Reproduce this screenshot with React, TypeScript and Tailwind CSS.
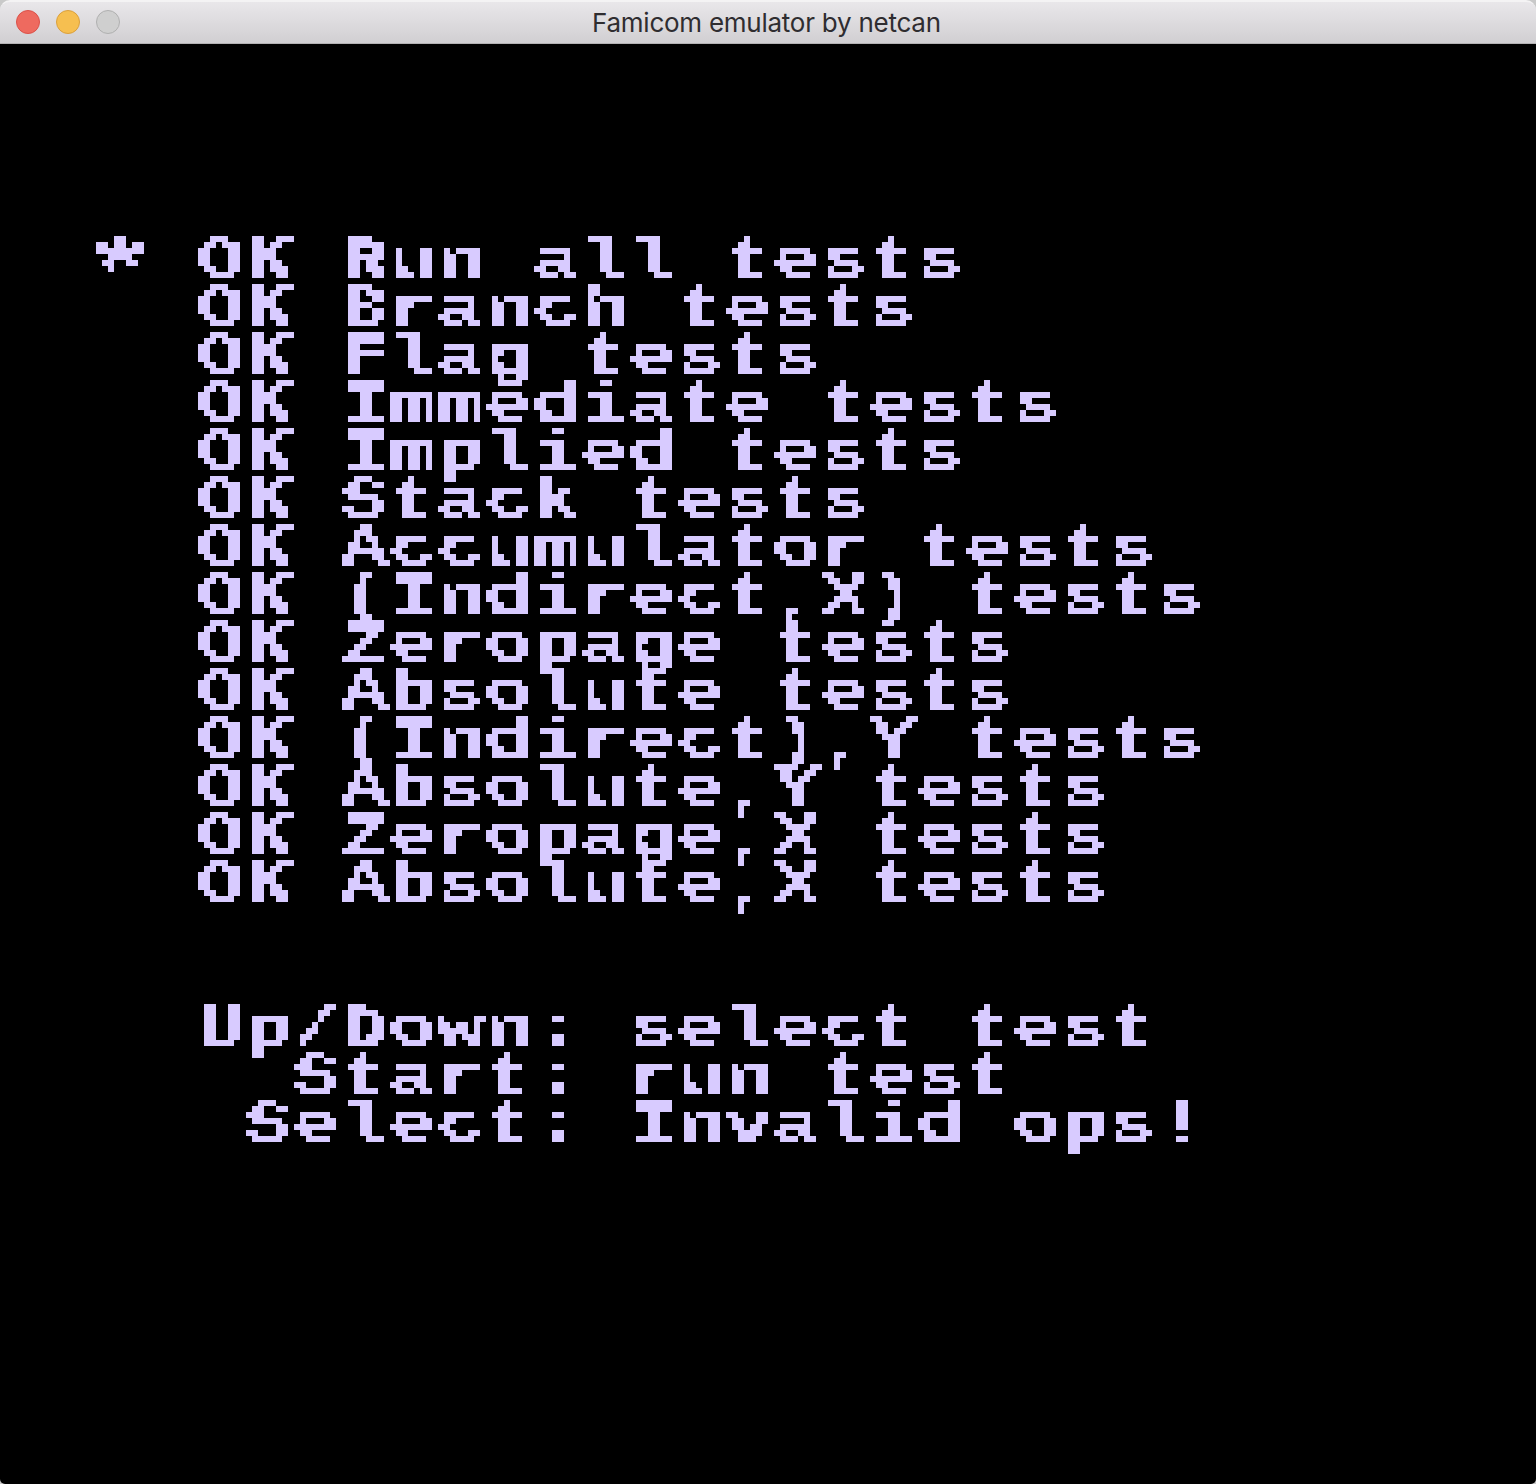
const tests = [
  'Run all tests',
  'Branch tests',
  'Flag tests',
  'Immediate tests',
  'Implied tests',
  'Stack tests',
  'Accumulator tests',
  '(Indirect,X) tests',
  'Zeropage tests',
  'Absolute tests',
  '(Indirect),Y tests',
  'Absolute,Y tests',
  'Zeropage,X tests',
  'Absolute,X tests',
];

const help = ['Up/Down: select test', '  Start: run test', ' Select: Invalid ops!'];

function TitleBar() {
  return (
    <header className="relative flex h-11 shrink-0 items-center justify-center rounded-t-[10px] border-t-2 border-b border-t-[#f4f3f4] border-b-[#b4b2b4] bg-linear-to-b from-[#e9e7ea] to-[#d1cfd2]">
      <div className="absolute top-2 left-4 flex items-center gap-4">
        <span className="size-6 rounded-full border border-[#dc5149] bg-[#ee6a5f]" />
        <span className="size-6 rounded-full border border-[#dba03c] bg-[#f6bf50]" />
        <span className="size-6 rounded-full border border-[#b0b0b0] bg-[#cfcfcf]" />
      </div>
      <h1 className="w-[352px] whitespace-nowrap text-[26px] leading-none tracking-[-0.25px] text-[#2f2d30] [font-family:Inter,'Liberation_Sans',sans-serif]">
        Famicom emulator by netcan
      </h1>
    </header>
  );
}

/* Renders everything on a coarse grid: one sample per 6px console pixel. */
function PixelFilter() {
  return (
    <svg className="absolute size-0" aria-hidden="true">
      <filter
        id="console-pixels"
        filterUnits="userSpaceOnUse"
        primitiveUnits="userSpaceOnUse"
        x="0"
        y="0"
        width="1536"
        height="1440"
        colorInterpolationFilters="sRGB"
      >
        <feFlood x="2" y="2" width="1" height="1" floodColor="#fff" result="dot" />
        <feComposite in="dot" in2="dot" operator="over" x="0" y="0" width="6" height="6" />
        <feTile x="0" y="0" width="1536" height="1440" result="grid" />
        <feComposite in="SourceGraphic" in2="grid" operator="in" />
        <feComponentTransfer>
          <feFuncA type="discrete" tableValues="0 1" />
        </feComponentTransfer>
        <feMorphology operator="dilate" radius="2" result="block" />
        <feOffset in="block" dx="1" dy="0" result="right" />
        <feMerge result="wide">
          <feMergeNode in="block" />
          <feMergeNode in="right" />
        </feMerge>
        <feOffset in="wide" dx="0" dy="1" result="down" />
        <feMerge result="full">
          <feMergeNode in="wide" />
          <feMergeNode in="down" />
        </feMerge>
        <feFlood floodColor="#d8cbff" />
        <feComposite in2="full" operator="in" />
      </filter>
    </svg>
  );
}

export default function App() {
  return (
    <div className="flex h-[1484px] w-[1536px] flex-col overflow-hidden bg-[#c9c9c9]">
      <PixelFilter />
      <TitleBar />
      <main className="flex-1 overflow-hidden rounded-b-[5px] bg-black">
        <div className="h-[1440px] pt-[193px] pl-[100px] [filter:url(#console-pixels)]">
          <div className="w-[1000px] origin-top-left scale-x-[1.3331] whitespace-pre text-[60px] leading-[48px] font-bold text-[#d8cbff] [font-family:'Liberation_Mono',monospace]">
            {tests.map((name, i) => (
              <div key={name} className="flex h-12">
                <span className="w-[72px]">
                  {i === 0 && <span className="inline-block origin-[18px_14px] translate-x-[-3px] translate-y-[11px] scale-x-160 scale-y-150">*</span>}
                </span>
                <span className="w-[108px]">OK</span>
                <span>{name}</span>
              </div>
            ))}
            <div className="mt-24 pl-[72px]">
              {help.map((line) => (
                <div key={line} className="h-12">{line}</div>
              ))}
            </div>
          </div>
        </div>
      </main>
    </div>
  );
}
